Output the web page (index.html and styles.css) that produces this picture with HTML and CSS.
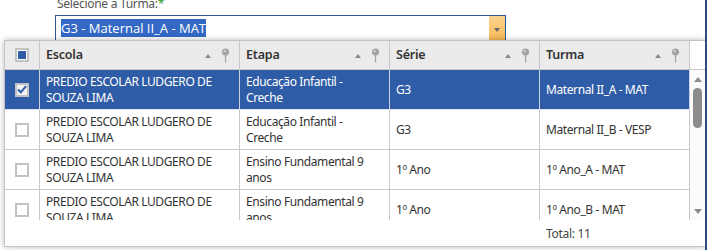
FILE: index.html
```html
<!DOCTYPE html>
<html lang="pt-BR">
<head>
<meta charset="utf-8">
<title>Selecione a Turma</title>
<link rel="stylesheet" href="styles.css">
</head>
<body>
<div class="page">
  <div class="label">Selecione a Turma:<span class="req">*</span></div>
  <div class="combo">
    <div class="combo-text"><span class="sel">G3 - Maternal II_A - MAT</span></div>
    <div class="combo-btn"><span class="tri-down"></span></div>
  </div>

  <div class="popup">
    <div class="grid header">
      <div class="cell chk-cell"><span class="chk indeterminate"><span class="ind"></span></span></div>
      <div class="cell hcell"><span class="htext">Escola</span><span class="sort"></span><svg class="pin" width="9" height="15" viewBox="0 0 9 15"><circle cx="4.5" cy="4" r="3.6" fill="#a3a3a3"/><circle cx="3.6" cy="3.1" r="1.2" fill="#d4d4d4"/><rect x="3.9" y="7" width="1.3" height="7.5" fill="#a3a3a3"/></svg></div>
      <div class="cell hcell"><span class="htext">Etapa</span><span class="sort"></span><svg class="pin" width="9" height="15" viewBox="0 0 9 15"><circle cx="4.5" cy="4" r="3.6" fill="#a3a3a3"/><circle cx="3.6" cy="3.1" r="1.2" fill="#d4d4d4"/><rect x="3.9" y="7" width="1.3" height="7.5" fill="#a3a3a3"/></svg></div>
      <div class="cell hcell"><span class="htext">Série</span><span class="sort"></span><svg class="pin" width="9" height="15" viewBox="0 0 9 15"><circle cx="4.5" cy="4" r="3.6" fill="#a3a3a3"/><circle cx="3.6" cy="3.1" r="1.2" fill="#d4d4d4"/><rect x="3.9" y="7" width="1.3" height="7.5" fill="#a3a3a3"/></svg></div>
      <div class="cell hcell"><span class="htext">Turma</span><span class="sort"></span><svg class="pin" width="9" height="15" viewBox="0 0 9 15"><circle cx="4.5" cy="4" r="3.6" fill="#a3a3a3"/><circle cx="3.6" cy="3.1" r="1.2" fill="#d4d4d4"/><rect x="3.9" y="7" width="1.3" height="7.5" fill="#a3a3a3"/></svg></div>
      <div class="cell blank"></div>
    </div>

    <div class="body">
      <div class="viewport">
        <div class="grid row selected">
          <div class="cell chk-cell"><span class="chk checked"><svg width="10" height="9" viewBox="0 0 10 9"><path d="M1 4.5 L3.8 7.3 L9 1.2" fill="none" stroke="#2b5aa6" stroke-width="2"/></svg></span></div>
          <div class="cell">PREDIO ESCOLAR LUDGERO DE SOUZA LIMA</div>
          <div class="cell">Educação Infantil - Creche</div>
          <div class="cell">G3</div>
          <div class="cell">Maternal II_A - MAT</div>
        </div>
        <div class="grid row">
          <div class="cell chk-cell"><span class="chk"></span></div>
          <div class="cell">PREDIO ESCOLAR LUDGERO DE SOUZA LIMA</div>
          <div class="cell">Educação Infantil - Creche</div>
          <div class="cell">G3</div>
          <div class="cell">Maternal II_B - VESP</div>
        </div>
        <div class="grid row">
          <div class="cell chk-cell"><span class="chk"></span></div>
          <div class="cell">PREDIO ESCOLAR LUDGERO DE SOUZA LIMA</div>
          <div class="cell">Ensino Fundamental 9 anos</div>
          <div class="cell">1º Ano</div>
          <div class="cell">1º Ano_A - MAT</div>
        </div>
        <div class="grid row">
          <div class="cell chk-cell"><span class="chk"></span></div>
          <div class="cell">PREDIO ESCOLAR LUDGERO DE SOUZA LIMA</div>
          <div class="cell">Ensino Fundamental 9 anos</div>
          <div class="cell">1º Ano</div>
          <div class="cell">1º Ano_B - MAT</div>
        </div>
      </div>
      <div class="scrollbar">
        <span class="sb-up"></span>
        <span class="sb-thumb"></span>
        <span class="sb-down"></span>
      </div>
    </div>

    <div class="grid footer">
      <div class="fcell"></div>
      <div class="fcell"></div>
      <div class="fcell"></div>
      <div class="fcell"></div>
      <div class="fcell total">Total: 11</div>
    </div>
  </div>
</div>
</body>
</html>
```

FILE: styles.css
```css
body {
  margin: 0;
  background: #fff;
  font-family: "Noto Sans", "Open Sans", "DejaVu Sans", sans-serif;
}

.page {
  position: relative;
  width: 705px;
  height: 250px;
  border-right: 2px solid #2b4c7e;
  overflow: hidden;
  background: #fff;
}

.label {
  margin: -4px 0 0 57px;
  height: 15px;
  font-size: 12px;
  letter-spacing: -0.3px;
  line-height: 15px;
  color: #555;
}

.req {
  color: #2e9e2e;
}

.combo {
  margin: 4px 0 0 55px;
  width: 451px;
  height: 30px;
  box-sizing: border-box;
  border: 1px solid #2d5799;
  display: flex;
}

.combo-text {
  flex: 1;
  padding: 4px 0 0 5px;
  font-family: "Open Sans", "Noto Sans", sans-serif;
  font-size: 13px;
  line-height: 16px;
}

.sel {
  background: #3368c4;
  color: #fff;
}

.combo-btn {
  width: 16px;
  background: linear-gradient(#fbd48e, #f6b64c);
  display: flex;
  justify-content: center;
  padding-top: 12px;
  box-sizing: border-box;
}

.tri-down {
  width: 0;
  height: 0;
  border-left: 3.5px solid transparent;
  border-right: 3.5px solid transparent;
  border-top: 4px solid #666;
}

.popup {
  position: absolute;
  left: 4px;
  top: 40px;
  width: 702px;
  height: 207px;
  box-sizing: border-box;
  border: 1px solid #c4c4c4;
  background: #fff;
  box-shadow: 0 0 6px rgba(0, 0, 0, 0.28);
  display: flex;
  flex-direction: column;
}

.grid {
  display: grid;
  grid-template-columns: 35px 200px 150px 150px 150px;
}

.header {
  grid-template-columns: 35px 200px 150px 150px 150px 15px;
  height: 29px;
  box-sizing: border-box;
  border-bottom: 1px solid #c8c8c8;
}

.cell {
  box-sizing: border-box;
  border-right: 1px solid #c8c8c8;
  display: flex;
  align-items: center;
  padding: 0 10px 0 6px;
  font-size: 12px;
  letter-spacing: -0.4px;
  line-height: 16px;
  color: #333;
}

.header .cell {
  background: #ebebeb;
  padding-right: 6px;
}

.header .blank {
  background: #fff;
  border-right: none;
}

.hcell {
  font-size: 12.5px;
  letter-spacing: -0.2px;
  font-weight: 600;
  color: #333;
}

.htext {
  flex: 1;
}

.sort {
  width: 0;
  height: 0;
  border-left: 3px solid transparent;
  border-right: 3px solid transparent;
  border-bottom: 4px solid #8a8a8a;
  margin-right: 10px;
  margin-top: 2px;
}

.pin {
  margin-right: 3px;
  display: block;
}

.chk-cell {
  justify-content: center;
  padding: 0;
}

.header .chk-cell {
  padding: 0;
}

.chk {
  width: 14px;
  height: 14px;
  box-sizing: border-box;
  border: 2px solid #c2c2c2;
  background: #fff;
  display: flex;
  align-items: center;
  justify-content: center;
}

.chk.checked {
  background: #f2f2f2;
}

.ind {
  width: 8px;
  height: 8px;
  background: #2e5ca5;
}

.body {
  display: flex;
  height: 150px;
}

.viewport {
  width: 685px;
  height: 150px;
  overflow: hidden;
}

.row {
  height: 40px;
  box-sizing: border-box;
  border-bottom: 1px solid #c8c8c8;
}

.row.selected {
  background: #2f5ca6;
  border-bottom-color: #dfe4ee;
}

.row.selected .cell {
  color: #fff;
  border-right-color: #c9d2e2;
}

.scrollbar {
  width: 15px;
  height: 150px;
  background: #fbfbfb;
  display: flex;
  flex-direction: column;
  align-items: center;
}

.sb-up {
  margin-top: 7px;
  width: 0;
  height: 0;
  border-left: 4.5px solid transparent;
  border-right: 4.5px solid transparent;
  border-bottom: 5px solid #8c8c8c;
}

.sb-thumb {
  margin-top: 6px;
  width: 9px;
  height: 40px;
  border-radius: 5px;
  background: #8c8c8c;
}

.sb-down {
  margin-top: 81px;
  width: 0;
  height: 0;
  border-left: 4.5px solid transparent;
  border-right: 4.5px solid transparent;
  border-top: 5px solid #8c8c8c;
}

.footer {
  flex: 1;
}

.fcell {
  display: flex;
  align-items: center;
  padding: 0 6px;
  font-size: 12px;
  letter-spacing: -0.3px;
  color: #444;
}
```
